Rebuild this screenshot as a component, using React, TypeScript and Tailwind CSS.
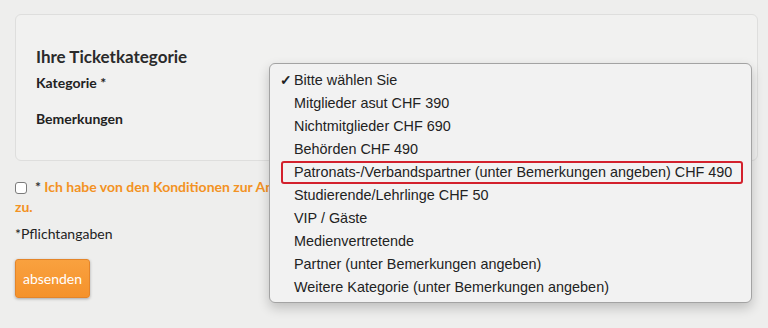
import React from "react";

const options = [
  "Bitte wählen Sie",
  "Mitglieder asut CHF 390",
  "Nichtmitglieder CHF 690",
  "Behörden CHF 490",
  "Patronats-/Verbandspartner (unter Bemerkungen angeben) CHF 490",
  "Studierende/Lehrlinge CHF 50",
  "VIP / Gäste",
  "Medienvertretende",
  "Partner (unter Bemerkungen angeben)",
  "Weitere Kategorie (unter Bemerkungen angeben)",
];

const App: React.FC = () => {
  return (
    <div
      className="relative w-[768px] h-[328px] overflow-hidden bg-[#eeeeed] text-[#222]"
      style={{ fontFamily: "Lato, 'Noto Sans', sans-serif" }}
    >
      <div className="pl-[15px] pr-[10px] pt-[14px]">
        {/* card */}
        <div className="h-[147px] rounded-[6px] border border-[#dededd] bg-[#f1f1f0] pl-[20px] pt-[30px]">
          <h2 className="text-[17px] font-bold leading-[24px] text-[#2a2a2a]">
            Ihre Ticketkategorie
          </h2>
          <div className="mt-[4px] text-[14px] font-bold leading-[20px]">Kategorie *</div>
          <div className="mt-[16px] text-[14px] font-bold leading-[20px]">Bemerkungen</div>
        </div>

        {/* consent */}
        <div className="mt-[16px] flex items-start text-[14px] leading-[20px]">
          <span className="mt-[5px] mr-[8px] h-[12px] w-[12px] shrink-0 rounded-[3px] border border-[#7b7b7b] bg-white" />
          <div className="font-bold text-[#f39223]">
            <span className="text-[#333]">* </span>
            Ich habe von den Konditionen zur Anmeldung Kenntnis genommen und stimme diesen
          </div>
        </div>
        <div className="text-[14px] font-bold leading-[20px] text-[#f39223]">zu.</div>

        <div className="mt-[7px] text-[14px] leading-[20px] text-[#222]">*Pflichtangaben</div>

        <button className="mt-[15px] h-[39px] w-[75px] rounded-[3px] border border-[#e4852a] bg-gradient-to-b from-[#f9a13f] to-[#f5922a] text-[14px] text-white shadow-[0_1px_3px_rgba(0,0,0,0.3)]">
          absenden
        </button>
      </div>

      {/* open select menu */}
      <div
        className="absolute left-[269px] top-[63px] w-[483px] rounded-[6px] border border-[#a3a3a3] bg-[#f2f2f2] pt-[5px] pb-[3px] shadow-[0_5px_12px_rgba(0,0,0,0.2)]"
        style={{ fontFamily: "'Liberation Sans', Arial, sans-serif" }}
      >
        {options.map((o, i) => (
          <div
            key={o}
            className={
              i === 4
                ? "ml-[11px] mr-[8px] flex h-[23px] items-center whitespace-nowrap rounded-[3px] border-2 border-[#d3212d] pl-[11px] text-[14.4px] text-[#222]"
                : "ml-[11px] mr-[8px] flex h-[23px] items-center whitespace-nowrap pl-[13px] text-[14.4px] text-[#222]"
            }
          >
            {i === 0 && (
              <span className="-ml-[14px] mr-[2px] w-[12px] text-[14px] font-bold">✓</span>
            )}
            {o}
          </div>
        ))}
      </div>
    </div>
  );
};

export default App;
